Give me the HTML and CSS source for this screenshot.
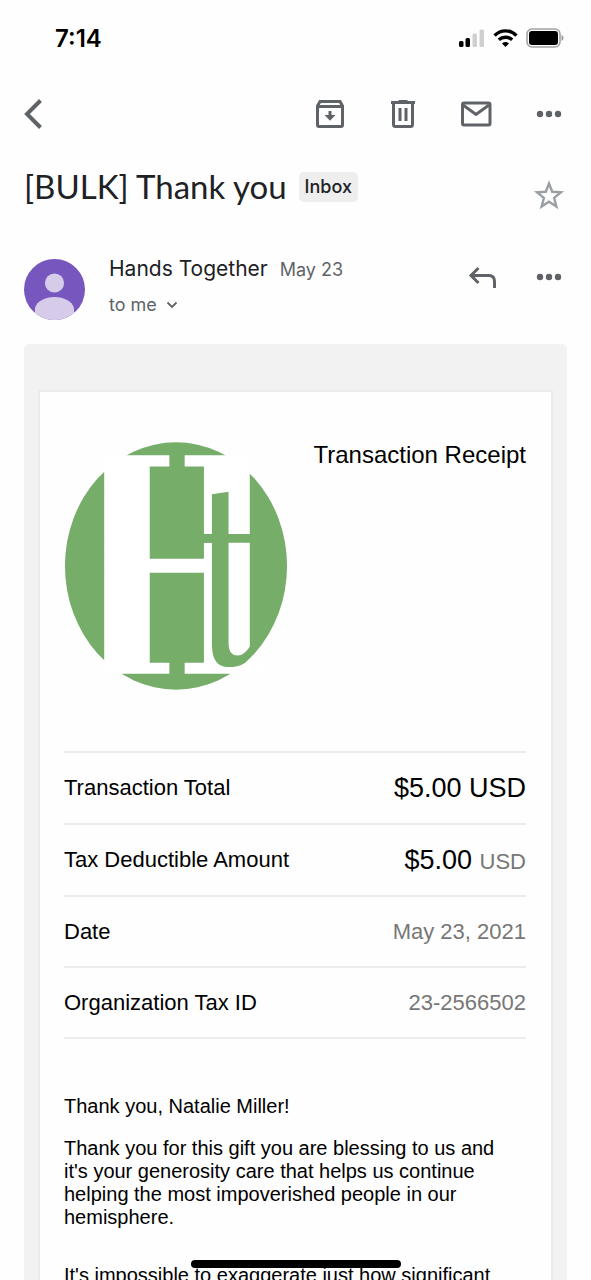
FILE: index.html
```html
<!DOCTYPE html>
<html lang="en">
<head>
<meta charset="utf-8">
<meta name="viewport" content="width=device-width, initial-scale=1">
<title>Mail</title>
<link rel="stylesheet" href="styles.css">
</head>
<body>
<div class="app">
  <div class="status">
    <span class="clock">7:14</span>
    <div class="status-icons">
      <svg width="27" height="18" viewBox="0 0 27 18" aria-hidden="true">
        <rect x="1" y="12" width="4.500" height="6" rx="1.500"/><rect x="7.500" y="9" width="4.500" height="9" rx="1.500"/>
        <g fill="#cfcfcf"><rect x="14.500" y="4.500" width="4.500" height="13.500" rx="1.500"/><rect x="21.500" y="0.500" width="4.500" height="17.500" rx="1.500"/></g>
      </svg>
      <svg width="25" height="18" viewBox="0 0 25 18" fill="none" stroke="#000" stroke-width="3.400" aria-hidden="true">
        <path d="M1.600 6.600C7.800.300 17.200.300 23.400 6.600"/><path d="M5.800 10.800C9.700 7.300 15.300 7.300 19.200 10.800"/>
        <path d="M9 14.400Q12.500 11.500 16 14.400L12.500 18Z" fill="#000" stroke="none"/>
      </svg>
      <svg width="38" height="20" viewBox="0 0 38 20" aria-hidden="true">
        <rect x="1" y="1" width="33" height="18" rx="5" fill="none" stroke="#a3a3a3" stroke-width="1.600"/>
        <rect x="3" y="3" width="29" height="14" rx="3"/><path d="M35.500 7c2.600 1 2.600 5 0 6z" fill="#999"/>
      </svg>
    </div>
  </div>

  <header class="toolbar">
    <button class="icon-btn" aria-label="Back"><svg width="32" height="32" viewBox="0 0 32 32"><path class="line back" d="M24.500 2.500 11 16l13.500 13.500"/></svg></button>
    <div class="actions">
      <button class="icon-btn" aria-label="Archive"><svg width="32" height="32" viewBox="0 0 32 32"><path class="line" d="M3.500 8V27Q3.500 28.500 5 28.500H27Q28.500 28.500 28.500 27V8L26 3.500H6ZM3.500 8.500H28.500"/><path d="M10.500 17h4v-4h3v4h4L16 22.800z"/></svg></button>
      <button class="icon-btn" aria-label="Delete"><svg width="32" height="32" viewBox="0 0 32 32"><path class="line" d="M6.500 5V26.500Q6.500 28.500 8.500 28.500H23.500Q25.500 28.500 25.500 26.500V5M4 4.500H28M13 10V23M19 10V23"/><path d="M11.500 2h9v3h-9z"/></svg></button>
      <button class="icon-btn" aria-label="Mark unread"><svg width="32" height="32" viewBox="0 0 32 32"><rect class="line" x="2.500" y="5" width="27.500" height="22" rx="1.500"/><path class="line" d="M3 7l13 9.500L29 7"/></svg></button>
      <button class="icon-btn" aria-label="More"><svg width="32" height="32" viewBox="0 0 32 32"><circle cx="7" cy="16" r="3.200"/><circle cx="16" cy="16" r="3.200"/><circle cx="25" cy="16" r="3.200"/></svg></button>
    </div>
  </header>

  <main class="message">
    <div class="subject">
      <h1>[BULK] Thank you</h1>
      <span class="label">Inbox</span>
      <button class="icon-btn star" aria-label="Star"><svg width="32" height="32" viewBox="0 0 32 32"><path d="M16 4.500l3.200 8.300 8.800.500-6.900 5.600 2.300 8.600-7.400-4.800-7.400 4.800 2.300-8.600L4 13.300l8.800-.500z" fill="none" stroke="#9a9fa5" stroke-width="2.400"/></svg></button>
    </div>

    <div class="sender">
      <svg class="avatar" width="61" height="61" viewBox="0 0 61 61" role="img" aria-label="Hands Together">
        <circle cx="30.500" cy="30.500" r="30.500" fill="#7756bd"/>
        <g fill="#d6cbe9"><circle cx="30.500" cy="24" r="9.600"/><path d="M11 54V49C13 42 21 38 30.500 38S48 42 50 49V54A30.500 30.500 0 0 1 11 54Z"/></g>
      </svg>
      <div class="who">
        <div class="from"><span class="name">Hands Together</span><time class="date">May 23</time></div>
        <button class="to">to me <svg width="12" height="8" viewBox="0 0 12 8"><path d="M1.500 1.500 6 6l4.500-4.500" fill="none" stroke="#5f6368" stroke-width="1.800"/></svg></button>
      </div>
      <div class="actions">
        <button class="icon-btn" aria-label="Reply"><svg width="32" height="32" viewBox="0 0 32 32"><path class="line" d="M12.500 7 5 14.500 12.500 22M5.500 14.500H23Q28.500 14.500 28.500 20.500V27"/></svg></button>
        <button class="icon-btn" aria-label="More options"><svg width="32" height="32" viewBox="0 0 32 32"><circle cx="7" cy="16" r="3.200"/><circle cx="16" cy="16" r="3.200"/><circle cx="25" cy="16" r="3.200"/></svg></button>
      </div>
    </div>

    <div class="mail">
      <article class="card">
        <div class="brand">
          <svg class="logo" width="224" height="248" viewBox="72 66 672 746" role="img" aria-label="Hands Together logo">
            <ellipse cx="408" cy="439" rx="334" ry="372" fill="#75ad69"/>
            <path fill="#fff" d="M192 106H388V140H329V417H492V140H434V106H630V343H566V216L516 223V343H492V369H516V670C516 720 530 743 568 743C596 743 620 735 642 706L700 763H434V730H492V459H329V730H388V763H192Z"/>
            <path fill="#75ad69" d="M490 343H518V369H490Z"/>
            <path fill="#fff" d="M566 369H630V681C618 700 606 708 594 708C574 708 566 694 566 668Z"/>
          </svg>
          <h2>Transaction Receipt</h2>
        </div>
        <table class="receipt">
          <tr class="money"><th scope="row">Transaction Total</th><td><span class="amount">$5.00 USD</span></td></tr>
          <tr class="money"><th scope="row">Tax Deductible Amount</th><td><span class="amount">$5.00 </span>USD</td></tr>
          <tr><th scope="row">Date</th><td>May 23, 2021</td></tr>
          <tr><th scope="row">Organization Tax ID</th><td>23-2566502</td></tr>
        </table>
        <div class="letter">
          <p>Thank you, Natalie Miller!</p>
          <p>Thank you for this gift you are blessing to us and it's your generosity care that helps us continue helping the most impoverished people in our hemisphere.</p>
          <p class="next">It's impossible to exaggerate just how significant</p>
        </div>
      </article>
    </div>
  </main>
  <div class="home-bar"></div>
</div>
</body>
</html>
```
FILE: styles.css
```css
* { box-sizing: border-box; }
body { margin: 0; background: #fefefe; color: #202124; font-family: Inter, Roboto, sans-serif; }
button { border: 0; padding: 0; background: none; font: inherit; color: inherit; cursor: pointer; }
h1, h2, p { margin: 0; font-weight: 400; }
svg { display: block; }

.app { position: relative; display: flex; flex-direction: column; height: 100vh; overflow: hidden; }
.status { display: flex; justify-content: space-between; align-items: center; height: 76px; padding: 0 27px 0 55px; flex: none; }
.clock { font-size: 24px; font-weight: 600; color: #000; }
.status-icons { display: flex; align-items: center; gap: 8px; }

.icon-btn { flex: none; width: 32px; height: 32px; }
.icon-btn svg { fill: #5f6368; }
.icon-btn .line { fill: none; stroke: #5f6368; stroke-width: 3; }
.icon-btn .back { stroke-width: 4; }
.toolbar { display: flex; justify-content: space-between; align-items: center; height: 76px; padding: 0 26px 0 16px; flex: none; }
.actions { display: flex; gap: 41px; }

.message { flex: 1; min-height: 0; overflow: hidden; padding: 0 24px; }
.subject { display: flex; align-items: center; height: 70px; padding-right: 2px; gap: 12px; }
.subject h1 { font-family: Lato, sans-serif; font-size: 33px; line-height: 40px; margin-bottom: 2px; white-space: nowrap; }
.label { padding: 0 6px; border-radius: 5px; background: #eee; font-size: 18px; line-height: 30px; font-weight: 500; }
.star { margin: 16px 0 0 auto; }

.sender { display: flex; align-items: flex-start; padding: 33px 2px 24px 0; }
.avatar { flex: none; margin: 4px 24px 0 0; }
.who { flex: 1; min-width: 0; }
.from { display: flex; align-items: baseline; gap: 12px; line-height: 28px; white-space: nowrap; }
.name { font-size: 21px; }
.date { font-size: 18px; color: #5f6368; }
.to { display: flex; align-items: center; gap: 9px; margin-top: 8px; font-size: 18px; line-height: 26px; color: #5f6368; }
.sender .actions { gap: 35px; margin-top: 6px; }

.mail { min-height: 100%; padding: 46px 14px; border-radius: 5px; background: #f2f2f2; }
.card { padding: 50px 25px 50px 24px; border: 2px solid #ebebeb; background: #fefefe; color: #000; font-family: "Liberation Sans", Arial, sans-serif; }
.brand { display: flex; justify-content: space-between; align-items: flex-start; margin-bottom: 61px; }
.brand h2 { font-size: 24px; line-height: 26px; white-space: nowrap; }
.logo { flex: none; }
.receipt { width: 100%; border-collapse: collapse; }
.receipt tr { height: 71px; border-top: 2px solid #ececec; }
.receipt .money { height: 72px; }
.receipt tr:last-child { border-bottom: 2px solid #ececec; }
.receipt th, .receipt td { padding: 0; font-size: 22px; }
.receipt th { font-weight: 400; text-align: left; }
.receipt td { text-align: right; color: #777; }
.receipt .amount { font-size: 27px; color: #000; }
.letter { margin-top: 56px; padding-right: 12px; font-size: 20px; line-height: 23px; }
.letter p { margin-bottom: 19px; }
.letter .next { margin-top: 35px; white-space: nowrap; }

.home-bar { position: absolute; left: 50%; bottom: 12px; width: 210px; height: 8px; margin-left: -105px; border-radius: 4px; background: #000; }
```
